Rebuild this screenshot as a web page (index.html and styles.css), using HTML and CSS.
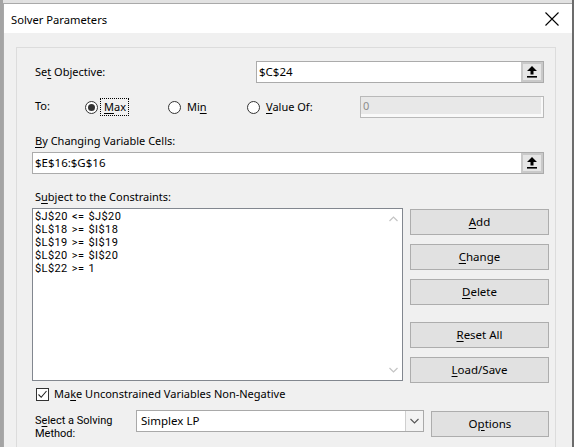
FILE: index.html
```html
<!DOCTYPE html>
<html>
<head>
<meta charset="utf-8">
<title>Solver Parameters</title>
<link rel="stylesheet" href="styles.css">
</head>
<body>
<div class="screen">
  <div class="window">
    <div class="titlebar">
      <span class="title">Solver Parameters</span>
      <svg class="close" width="14" height="14" viewBox="0 0 14 14"><path d="M0.5 0.5 L13.5 13.5 M13.5 0.5 L0.5 13.5" stroke="#000" stroke-width="1.1" fill="none"/></svg>
    </div>
    <div class="body">
      <div class="group">
        <div class="row-objective">
          <span class="lbl">Se<u>t</u> Objective:</span>
          <div class="refbox">
            <span class="refval">$C$24</span>
            <span class="refbtn"><svg width="10" height="12" viewBox="0 0 10 12"><path d="M5 0 L10 5 L6.5 5 L6.5 8.5 L3.5 8.5 L3.5 5 L0 5 Z" fill="#000"/><rect x="0" y="10" width="10" height="1.6" fill="#000"/></svg></span>
          </div>
        </div>

        <div class="row-to">
          <span class="lbl">To:</span>
          <label class="radio r-max"><span class="circle checked"></span><span class="focus"><u>M</u>ax</span></label>
          <label class="radio r-min"><span class="circle"></span><span>Mi<u>n</u></span></label>
          <label class="radio r-val"><span class="circle"></span><span><u>V</u>alue Of:</span></label>
          <div class="valbox">0</div>
        </div>

        <div class="lbl sect"><u>B</u>y Changing Variable Cells:</div>
        <div class="refbox wide">
          <span class="refval">$E$16:$G$16</span>
          <span class="refbtn"><svg width="10" height="12" viewBox="0 0 10 12"><path d="M5 0 L10 5 L6.5 5 L6.5 8.5 L3.5 8.5 L3.5 5 L0 5 Z" fill="#000"/><rect x="0" y="10" width="10" height="1.6" fill="#000"/></svg></span>
        </div>

        <div class="lbl sect">S<u>u</u>bject to the Constraints:</div>
        <div class="constraints">
          <div class="list">
            <div class="items">
              <div>$J$20 &lt;= $J$20</div>
              <div>$L$18 &gt;= $I$18</div>
              <div>$L$19 &gt;= $I$19</div>
              <div>$L$20 &gt;= $I$20</div>
              <div>$L$22 &gt;= 1</div>
            </div>
            <div class="scroll">
              <svg width="9" height="6" viewBox="0 0 9 6"><path d="M0.5 5 L4.5 1 L8.5 5" stroke="#c4c4c4" stroke-width="1.2" fill="none"/></svg>
              <svg width="9" height="6" viewBox="0 0 9 6"><path d="M0.5 1 L4.5 5 L8.5 1" stroke="#c4c4c4" stroke-width="1.2" fill="none"/></svg>
            </div>
          </div>
          <div class="buttons">
            <button class="btn"><u>A</u>dd</button>
            <button class="btn"><u>C</u>hange</button>
            <button class="btn"><u>D</u>elete</button>
            <button class="btn gap"><u>R</u>eset All</button>
            <button class="btn"><u>L</u>oad/Save</button>
          </div>
        </div>

        <label class="check-row">
          <span class="checkbox"><svg width="11" height="11" viewBox="0 0 11 11"><path d="M1.5 5.5 L4.2 8.3 L9.5 2" stroke="#222" stroke-width="1.1" fill="none"/></svg></span>
          <span>Ma<u>k</u>e Unconstrained Variables Non-Negative</span>
        </label>

        <div class="method-row">
          <span class="lbl method-lbl"><span class="ml">S<u>e</u>lect a Solving</span><span class="ml">Method:</span></span>
          <div class="select">
            <span class="selval">Simplex LP</span>
            <span class="selarrow"><svg width="9" height="6" viewBox="0 0 9 6"><path d="M0.5 1 L4.5 5 L8.5 1" stroke="#555" stroke-width="1.1" fill="none"/></svg></span>
          </div>
          <button class="btn options">O<u>p</u>tions</button>
        </div>
      </div>
    </div>
  </div>
</div>
</body>
</html>
```

FILE: styles.css
```css
* { box-sizing: border-box; }

html, body {
  margin: 0;
  padding: 0;
}

body {
  font-family: "Noto Sans", "Open Sans", "Liberation Sans", sans-serif;
  font-size: 11px;
  color: #000;
}

u { text-decoration: underline; text-underline-offset: 2px; }

.screen {
  width: 574px;
  height: 447px;
  overflow: hidden;
  padding: 3px 0 0 3px;
  background: linear-gradient(to right, #a4a4a4 0 3px, #e2e2e2 3px 572px, #6c6c6c 572px);
}

.window {
  width: 569px;
  height: 470px;
  border-left: 1px solid #a9a9a9;
  border-top: 1px solid #a9a9a9;
  background: #f0f0f0;
  display: flex;
  flex-direction: column;
}

.titlebar {
  flex: 0 0 29px;
  height: 29px;
  background: #fff;
  display: flex;
  align-items: center;
  padding: 0 0 0 7px;
}

.title {
  font-size: 11.2px;
  line-height: 16px;
  margin-top: 2px;
}

.close {
  margin-left: auto;
  margin-right: 13px;
  margin-top: 1px;
}

.body {
  flex: 1 0 auto;
  background: #f0f0f0;
  padding: 14px 0 0 12px;
}

.group {
  width: 540px;
  height: 420px;
  border: 1px solid #dcdcdc;
  padding: 13px 5px 0 15px;
}

.lbl {
  padding-left: 3px;
  line-height: 16px;
}

.row-objective {
  display: grid;
  grid-template-columns: 224px 288px;
  align-items: center;
  height: 22px;
}

.refbox {
  height: 22px;
  border: 1px solid #ababab;
  background: #fff;
  display: flex;
  align-items: stretch;
}

.refbox.wide { width: 512px; margin-top: 3px; }

.refval {
  flex: 1;
  padding-left: 2px;
  line-height: 20px;
  font-size: 11.5px;
}

.refbtn {
  width: 22px;
  background: #e6e6e6;
  border: 2px solid #c9c9c9;
  display: flex;
  align-items: center;
  justify-content: center;
}

.row-to {
  margin-top: 13px;
  height: 22px;
  display: grid;
  grid-template-columns: 53px 83px 79px 113px 184px;
  align-items: center;
}

.row-to .lbl { margin-top: -3px; }

.radio {
  display: flex;
  align-items: center;
  gap: 3px;
  line-height: 16px;
}

.circle {
  width: 13px;
  height: 13px;
  border-radius: 50%;
  border: 1px solid #333;
  background: #fff;
  display: flex;
  align-items: center;
  justify-content: center;
  margin-top: 1px;
}

.circle.checked::after {
  content: "";
  width: 7px;
  height: 7px;
  border-radius: 50%;
  background: #333;
}

.radio span + span { padding: 0 2px 0 3px; }

.focus {
  outline: 1px dotted #000;
  outline-offset: 0;
  padding: 0 2px 0 3px;
  line-height: 16px;
}

.valbox {
  height: 22px;
  border: 1px solid #b9b9b9;
  background: #e8e8e8;
  box-shadow: inset -2px -3px 0 #f9f9f9;
  color: #8c8c8c;
  padding-left: 2px;
  line-height: 18px;
}

.sect { margin-top: 15px; }

.constraints {
  margin-top: 3px;
  display: flex;
  align-items: flex-start;
}

.list {
  width: 371px;
  height: 173px;
  border: 1px solid #82878f;
  background: #fff;
  display: flex;
}

.items {
  flex: 1;
  padding: 1px 0 0 2px;
  line-height: 13px;
  font-family: Roboto, "Noto Sans", sans-serif;
  font-size: 11px;
  letter-spacing: 0.4px;
  word-spacing: 1px;
}

.scroll {
  width: 17px;
  display: flex;
  flex-direction: column;
  justify-content: space-between;
  align-items: center;
  padding: 7px 0 7px;
}

.buttons {
  margin-left: 7px;
  margin-top: 1px;
  display: flex;
  flex-direction: column;
  gap: 9px;
  width: 139px;
}

.btn {
  font-family: inherit;
  font-size: 11.5px;
  height: 26px;
  background: #e1e1e1;
  border: 1px solid #adadad;
  color: #000;
  padding: 0;
  line-height: 16px;
}

.btn.gap { margin-top: 8px; }

.check-row {
  margin-top: 4px;
  display: flex;
  align-items: center;
  gap: 5px;
  padding-left: 4px;
  line-height: 14px;
}

.checkbox {
  width: 13px;
  height: 13px;
  border: 1px solid #333;
  background: #fff;
  display: flex;
  align-items: center;
  justify-content: center;
}

.method-row {
  margin-top: 9px;
  display: grid;
  grid-template-columns: 104px 288px 118px;
  align-items: start;
}

.method-lbl {
  display: flex;
  flex-direction: column;
  font-family: Roboto, "Noto Sans", sans-serif;
  font-size: 11px;
  line-height: 13px;
  margin-top: 4px;
}

.ml { display: block; height: 13px; }

.select {
  height: 22px;
  border: 1px solid #a9a9a9;
  background: #fff;
  display: flex;
}

.selval {
  flex: 1;
  padding-left: 4px;
  line-height: 20px;
  font-size: 11.5px;
}

.selarrow {
  width: 18px;
  border-left: 1px solid #cfcfcf;
  background: #f3f3f3;
  display: flex;
  align-items: center;
  justify-content: center;
}

.options {
  margin-top: 1px;
  margin-left: 7px;
  width: 118px;
}
```
